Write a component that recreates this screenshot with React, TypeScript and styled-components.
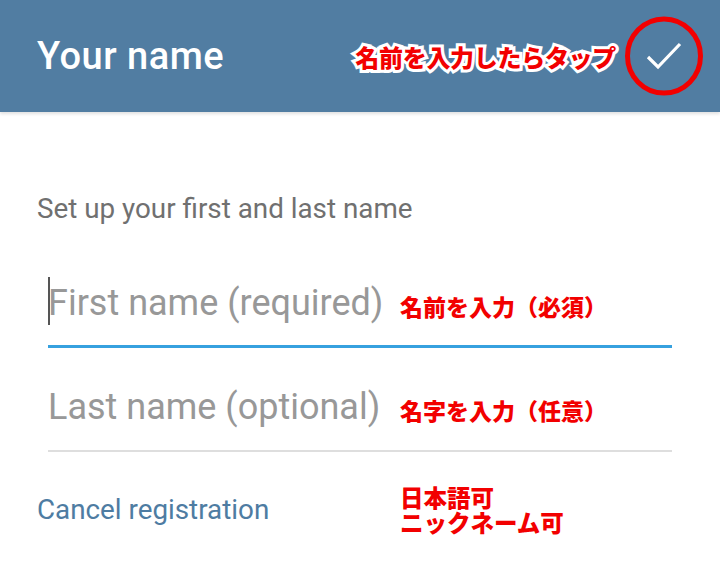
import React from "react";
import styled, { createGlobalStyle } from "styled-components";

const Global = createGlobalStyle`
  html, body { margin: 0; padding: 0; background: #ffffff; }
  body { font-family: Roboto, "Noto Sans", "Noto Sans CJK JP", sans-serif; }
`;

const Page = styled.div`
  width: 720px;
  height: 565px;
  overflow: hidden;
  background: #ffffff;
`;

const Header = styled.header`
  height: 112px;
  background: #517da2;
  display: flex;
  align-items: center;
  padding-left: 37px;
  box-shadow: 0 2px 3px rgba(0, 0, 0, 0.12);
  position: relative;
  z-index: 1;
`;

const Title = styled.h1`
  margin: 0;
  font-family: Roboto, sans-serif;
  font-weight: 500;
  font-size: 38px;
  letter-spacing: 0.5px;
  color: #ffffff;
  flex: 1;
`;

const Note = styled.span<{ $size?: number; $outlined?: boolean }>`
  font-family: "Noto Sans CJK JP", sans-serif;
  font-weight: 900;
  font-size: ${(p) => p.$size ?? 23}px;
  line-height: ${(p) => (p.$size ?? 23) + 1}px;
  color: #f20000;
  white-space: nowrap;
  ${(p) =>
    p.$outlined
      ? `-webkit-text-stroke: 6px #ffffff; paint-order: stroke fill;`
      : ``}
`;

const HeaderNote = styled(Note)`
  margin-right: 12px;
  letter-spacing: -0.3px;
`;

const CheckButton = styled.div`
  width: 72px;
  height: 72px;
  margin-right: 20px;
  position: relative;
  display: flex;
  align-items: center;
  justify-content: center;
`;

const Ring = styled.svg`
  position: absolute;
  left: -4px;
  top: -4px;
  width: 80px;
  height: 80px;
  overflow: visible;
`;

const Content = styled.main`
  padding: 81px 48px 0 37px;
`;

const Subtitle = styled.p`
  margin: 0;
  font-size: 27.8px;
  line-height: 32px;
  color: #707070;
`;

const Field = styled.div<{ $active?: boolean }>`
  position: relative;
  margin-left: 11px;
  display: grid;
  grid-template-columns: 352px 1fr;
  align-items: center;
  padding-bottom: ${(p) => (p.$active ? 22 : 23)}px;
  border-bottom: ${(p) => (p.$active ? "3px solid #36a1df" : "2px solid #dedede")};
  margin-top: ${(p) => (p.$active ? 58 : 39)}px;
`;

const Placeholder = styled.span`
  font-size: 36px;
  line-height: 40px;
  color: #989898;
  white-space: nowrap;
`;

const Caret = styled.span`
  position: absolute;
  left: 0;
  top: -6px;
  width: 2px;
  height: 48px;
  background: #555555;
`;

const FieldNote = styled(Note)`
  margin-top: 6px;
`;

const Footer = styled.div`
  margin-top: 33px;
  display: grid;
  grid-template-columns: 363px 1fr;
  align-items: center;
`;

const CancelLink = styled.a`
  font-size: 27.8px;
  line-height: 30px;
  color: #4e7ca2;
  text-decoration: none;
  white-space: nowrap;
`;

const NoteStack = styled.div`
  display: flex;
  flex-direction: column;
`;

export default function App() {
  return (
    <Page>
      <Global />
      <Header>
        <Title>Your name</Title>
        <HeaderNote $size={24} $outlined>名前を入力したらタップ</HeaderNote>
        <CheckButton>
          <svg width="36" height="30" viewBox="0 0 36 30">
            <polyline points="2,16 12,26 34,3" fill="none" stroke="#ffffff" strokeWidth="3.2" />
          </svg>
          <Ring viewBox="0 0 80 80">
            <ellipse cx="40" cy="40" rx="36.5" ry="37" fill="none" stroke="#f20000" strokeWidth="5" />
          </Ring>
        </CheckButton>
      </Header>
      <Content>
        <Subtitle>Set up your first and last name</Subtitle>
        <Field $active>
          <Caret />
          <Placeholder>First name (required)</Placeholder>
          <FieldNote>名前を入力（必須）</FieldNote>
        </Field>
        <Field>
          <Placeholder>Last name (optional)</Placeholder>
          <FieldNote>名字を入力（任意）</FieldNote>
        </Field>
        <Footer>
          <CancelLink href="#">Cancel registration</CancelLink>
          <NoteStack>
            <Note $size={23.5}>日本語可</Note>
            <Note $size={23.5}>ニックネーム可</Note>
          </NoteStack>
        </Footer>
      </Content>
    </Page>
  );
}
